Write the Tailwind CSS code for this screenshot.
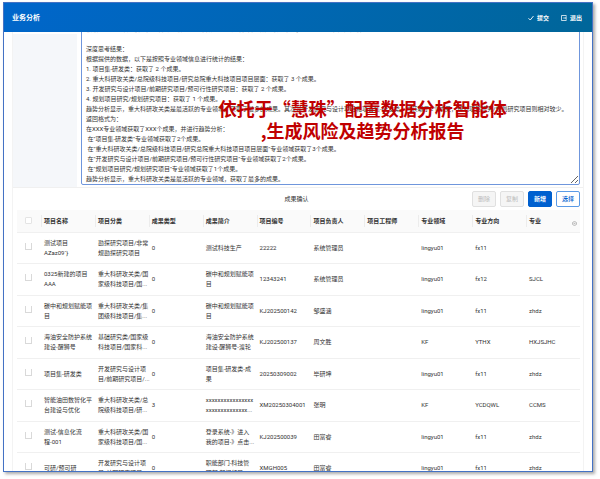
<!doctype html>
<html lang="zh-CN">
  <head>
    <meta charset="utf-8" />
    <title>业务分析</title>
    <script src="https://cdn.jsdelivr.net/npm/@tailwindcss/browser@4"></script>
  </head>
  <body class="bg-white font-['Roboto','Noto_Sans_CJK_SC',sans-serif] text-[6px] leading-[10px] text-[#333]">
    <div class="h-screen pt-0.5 pr-[7px] pb-[7px] pl-[3px]">
      <div class="relative flex h-full flex-col overflow-hidden border border-[#4472c4] bg-white shadow-[2px_2px_3px_#aaa]">

        <header class="z-10 flex h-[29px] shrink-0 items-center justify-between bg-linear-135 from-[#0066cc] to-[#006699] pr-[10px] pl-2 text-white">
          <h1 class="text-[7px] font-bold">业务分析</h1>
          <div class="flex gap-3 font-bold">
            <button class="flex items-center gap-[3px]">
              <svg class="size-[6px]" viewBox="0 0 12 12" fill="none" stroke="currentColor" stroke-width="1.8"><path d="M1 6.500 4.500 10 11 2" /></svg>
              提交
            </button>
            <button class="flex items-center gap-[3px]">
              <svg class="size-[6px]" viewBox="0 0 12 12" fill="none" stroke="currentColor" stroke-width="1.5"><path d="M10.500 3.500V1H1v10h9.500V8.500M4.500 6H11M9 4l2 2-2 2" /></svg>
              退出
            </button>
          </div>
        </header>

        <main class="mr-2 ml-2 min-h-0 flex-1 border-x border-[#f3f3f3]">
          <!-- analysis result -->
          <div class="-mt-[9px] flex gap-1 border-b border-[#f0f0f0] pr-[3px]">
            <label for="result" class="mt-[11px] w-16 shrink-0 bg-[#f5f7fa]" aria-label="分析结果"></label>
            <textarea id="result" rows="16" class="mb-0.5 block min-w-0 flex-1 resize-y overflow-hidden rounded-xs border border-[#6f96dc] px-1 outline-none">根据查询到的项目信息，对各专业领域的成果数量进行统计，并按照获取成果的多少进行排序和趋势分析。
&nbsp;
深度思考结果：
根据提供的数据，以下是按照专业领域信息进行统计的结果：
1. 项目集-研发类：获取了 2 个成果。
2. 重大科研攻关类/总院级科技项目/研究总院重大科技项目项目层面：获取了 3 个成果。
3. 开发研究与设计项目/前期研究项目/预可行性研究项目：获取了 2 个成果。
4. 规划项目研究/规划研究项目：获取了 1 个成果。
趋势分析显示，重大科研攻关类是最活跃的专业领域，获取了最多的成果。其次是开发研究与设计项目和项目集-研发类，均获取了2个成果，规划项目研究/规划研究项目则相对较少。
返回格式为：
在XXX专业领域获取了XXX个成果，并进行趋势分析：
 在"项目集-研发类"专业领域获取了2个成果。
 在"重大科研攻关类/总院级科技项目/研究总院重大科技项目项目层面"专业领域获取了3个成果。
 在"开发研究与设计项目/前期研究项目/预可行性研究项目"专业领域获取了2个成果。
 在"规划项目研究/规划研究项目"专业领域获取了1个成果。
趋势分析显示，重大科研攻关类是最活跃的专业领域，获取了最多的成果。</textarea>
          </div>

          <!-- result confirmation -->
          <div class="grid h-[22px] grid-cols-3 items-center pr-[3px]">
            <h2 class="col-start-2 text-center">成果确认</h2>
            <div class="flex justify-end gap-1">
              <button disabled class="h-4 w-6 rounded-xs border border-[#e0e0e0] bg-[#f5f5f5] text-[#bbb]">删除</button>
              <button disabled class="h-4 w-6 rounded-xs border border-[#e0e0e0] bg-[#f5f5f5] text-[#bbb]">复制</button>
              <button class="h-4 w-6 rounded-xs border border-[#0060cf] bg-[#0060cf] font-bold text-white">新增</button>
              <button class="h-4 w-6 rounded-xs border border-[#5b9be6] bg-white font-medium text-[#0060cf]">选择</button>
            </div>
          </div>

          <div class="pr-[3px] pl-1">
            <table class="w-full table-fixed border-collapse text-left">
              <colgroup>
                <col class="w-6" />
                <col span="10" />
              </colgroup>
              <thead class="bg-[#fafafa]">
                <tr class="h-[22px] border-b border-[#f0f0f0]">
                  <th class="pl-2"><input type="checkbox" aria-label="全选" class="block size-[7px] appearance-none rounded-[1px] border border-[#e4e4e4] bg-white" /></th>
                  <th class="px-[3px] bg-linear-to-r from-[#ececec] from-[1px] to-transparent to-[1px] bg-size-[100%_12px] bg-center bg-no-repeat">项目名称</th>
                  <th class="px-[3px] bg-linear-to-r from-[#ececec] from-[1px] to-transparent to-[1px] bg-size-[100%_12px] bg-center bg-no-repeat">项目分类</th>
                  <th class="px-[3px] bg-linear-to-r from-[#ececec] from-[1px] to-transparent to-[1px] bg-size-[100%_12px] bg-center bg-no-repeat">成果类型</th>
                  <th class="px-[3px] bg-linear-to-r from-[#ececec] from-[1px] to-transparent to-[1px] bg-size-[100%_12px] bg-center bg-no-repeat">成果简介</th>
                  <th class="px-[3px] bg-linear-to-r from-[#ececec] from-[1px] to-transparent to-[1px] bg-size-[100%_12px] bg-center bg-no-repeat">项目编号</th>
                  <th class="px-[3px] bg-linear-to-r from-[#ececec] from-[1px] to-transparent to-[1px] bg-size-[100%_12px] bg-center bg-no-repeat">项目负责人</th>
                  <th class="px-[3px] bg-linear-to-r from-[#ececec] from-[1px] to-transparent to-[1px] bg-size-[100%_12px] bg-center bg-no-repeat">项目工程师</th>
                  <th class="px-[3px] bg-linear-to-r from-[#ececec] from-[1px] to-transparent to-[1px] bg-size-[100%_12px] bg-center bg-no-repeat">专业领域</th>
                  <th class="px-[3px] bg-linear-to-r from-[#ececec] from-[1px] to-transparent to-[1px] bg-size-[100%_12px] bg-center bg-no-repeat">专业方向</th>
                  <th class="px-[3px] bg-linear-to-r from-[#ececec] from-[1px] to-transparent to-[1px] bg-size-[100%_12px] bg-center bg-no-repeat">
                    <div class="flex items-end justify-between">
                      专业
                      <svg class="size-[5px] text-[#aaa]" viewBox="0 0 12 12" fill="none" stroke="currentColor" stroke-width="2"><path d="M6 1 10.500 3.500v5L6 11 1.500 8.500v-5Z" /><circle cx="6" cy="6" r="1" /></svg>
                    </div>
                  </th>
                </tr>
              </thead>
              <tbody class="[&_input]:block [&_input]:size-[7px] [&_input]:appearance-none [&_input]:border [&_input]:border-t-0 [&_input]:border-[#d9d9d9] [&_td]:px-[3px] [&_td]:whitespace-nowrap [&_td:first-child]:pt-[10px] [&_td:first-child]:pl-2 [&_td:first-child]:align-top [&_tr]:border-b [&_tr]:border-[#f0f0f0] [&_tr:nth-child(even)]:h-8 [&_tr:nth-child(odd)]:h-[31px]">
                <tr><td><input type="checkbox" aria-label="选择 测试项目" /></td><td>测试项目<br />AZaz09`}</td><td>勘探研究项目/非常<br />规勘探研究项目</td><td>0</td><td>测试科技生产</td><td>22222</td><td>系统管理员</td><td></td><td>lingyu01</td><td>fx11</td><td></td></tr>
                <tr><td><input type="checkbox" aria-label="选择 0325新建的项目" /></td><td>0325新建的项目<br />AAA</td><td>重大科研攻关类/国<br />家级科技项目/国...</td><td>0</td><td>碳中和规划赋能项<br />目</td><td>12343241</td><td>系统管理员</td><td></td><td>lingyu01</td><td>fx12</td><td>SJCL</td></tr>
                <tr><td><input type="checkbox" aria-label="选择 碳中和规划赋能项目" /></td><td>碳中和规划赋能项<br />目</td><td>重大科研攻关类/集<br />团级科技项目/集...</td><td>0</td><td>碳中和规划赋能项<br />目</td><td>KJ202500142</td><td>邹盛涵</td><td></td><td>lingyu01</td><td>fx11</td><td>zhdz</td></tr>
                <tr><td><input type="checkbox" aria-label="选择 海油安全防护系统建设" /></td><td>海油安全防护系统<br />建设-醒狮号</td><td>基础研究类/国家级<br />科技项目/国家科...</td><td>0</td><td>海油安全防护系统<br />建设-醒狮号-渡轮</td><td>KJ202500137</td><td>周文胜</td><td></td><td>KF</td><td>YTHX</td><td>HXJSJHC</td></tr>
                <tr><td><input type="checkbox" aria-label="选择 项目集-研发类" /></td><td>项目集-研发类</td><td>开发研究与设计项<br />目/前期研究项目/...</td><td>0</td><td>项目集-研发类-成<br />果</td><td>20250309002</td><td>毕研坤</td><td></td><td>lingyu01</td><td>fx11</td><td>zhdz</td></tr>
                <tr><td><input type="checkbox" aria-label="选择 智能油田数智化平台" /></td><td>智能油田数智化平<br />台建设与优化</td><td>重大科研攻关类/总<br />院级科技项目/研...</td><td>3</td><td>xxxxxxxxxxxxxxxx<br />xxxxxxxxxxxxxx...</td><td>XM20250304001</td><td>张明</td><td></td><td>KF</td><td>YCDQWL</td><td>CCMS</td></tr>
                <tr><td><input type="checkbox" aria-label="选择 测试-信息化流程" /></td><td>测试-信息化流<br />程-001</td><td>重大科研攻关类/国<br />家级科技项目/国...</td><td>0</td><td>登录系统-》进入<br />我的项目-》点击...</td><td>KJ202500039</td><td>田富睿</td><td></td><td>lingyu01</td><td>fx11</td><td>zhdz</td></tr>
                <tr><td><input type="checkbox" aria-label="选择 可研/预可研" /></td><td>可研/预可研</td><td>开发研究与设计项<br />目/前期研究项目/...</td><td>0</td><td>职能部门-科技管<br />理部-部门领导...</td><td>XMGH005</td><td>田富睿</td><td></td><td>lingyu01</td><td>fx11</td><td>zhdz</td></tr>
              </tbody>
            </table>
          </div>
        </main>

        <!-- caption over the textarea -->
        <p class="pointer-events-none absolute top-[94px] left-[61%] z-20 -translate-x-1/2 text-center font-['Noto_Sans_CJK_SC',sans-serif] text-lg leading-[22px] font-bold whitespace-nowrap text-[#c00000]">依托于“慧珠”配置数据分析智能体<br />,生成风险及趋势分析报告</p>
      </div>
    </div>
  </body>
</html>
